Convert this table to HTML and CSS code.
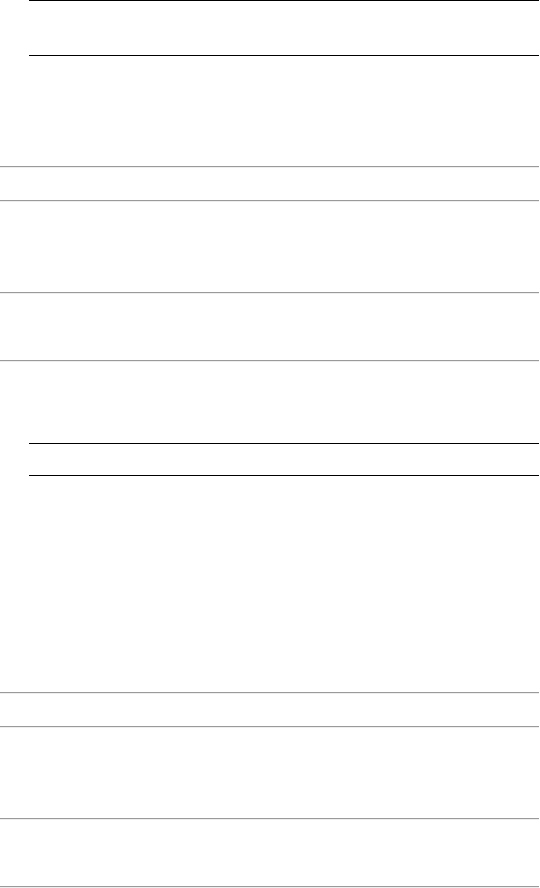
FILE: index.html
```html
<!DOCTYPE html>
<html>
<head>
<meta charset="utf-8">
<link rel="stylesheet" href="styles.css">
</head>
<body>
<div class="page">
  <div class="table-box tb1"></div>
  <div class="gap g1"></div>
  <div class="rule"></div>
  <div class="gap g2"></div>
  <div class="rule"></div>
  <div class="gap g3"></div>
  <div class="rule"></div>
  <div class="gap g4"></div>
  <div class="rule"></div>
  <div class="gap g5"></div>
  <div class="table-box tb2"></div>
  <div class="gap g6"></div>
  <div class="rule"></div>
  <div class="gap g2"></div>
  <div class="rule"></div>
  <div class="gap g3"></div>
  <div class="rule"></div>
  <div class="gap g4"></div>
  <div class="rule"></div>
</div>
</body>
</html>
```

FILE: styles.css
```css
html, body {
  margin: 0;
  padding: 0;
  background: #fff;
  font-family: "Liberation Serif", serif;
}
.page {
  display: flex;
  flex-direction: column;
  width: 540px;
}
.table-box {
  margin-left: 29px;
  width: 510px;
  border-top: 1px solid #000;
  border-bottom: 1px solid #000;
  box-sizing: border-box;
}
.tb1 { height: 56px; }
.tb2 { height: 33px; }
.rule {
  width: 539px;
  height: 0;
  border-top: 1px solid #9a9a9a;
  border-bottom: 1px solid #eeeeee;
}
.gap { flex: none; }
.g1 { height: 110px; }
.g2 { height: 32px; }
.g3 { height: 90px; }
.g4 { height: 66px; }
.g5 { height: 81px; }
.g6 { height: 216px; }
```
